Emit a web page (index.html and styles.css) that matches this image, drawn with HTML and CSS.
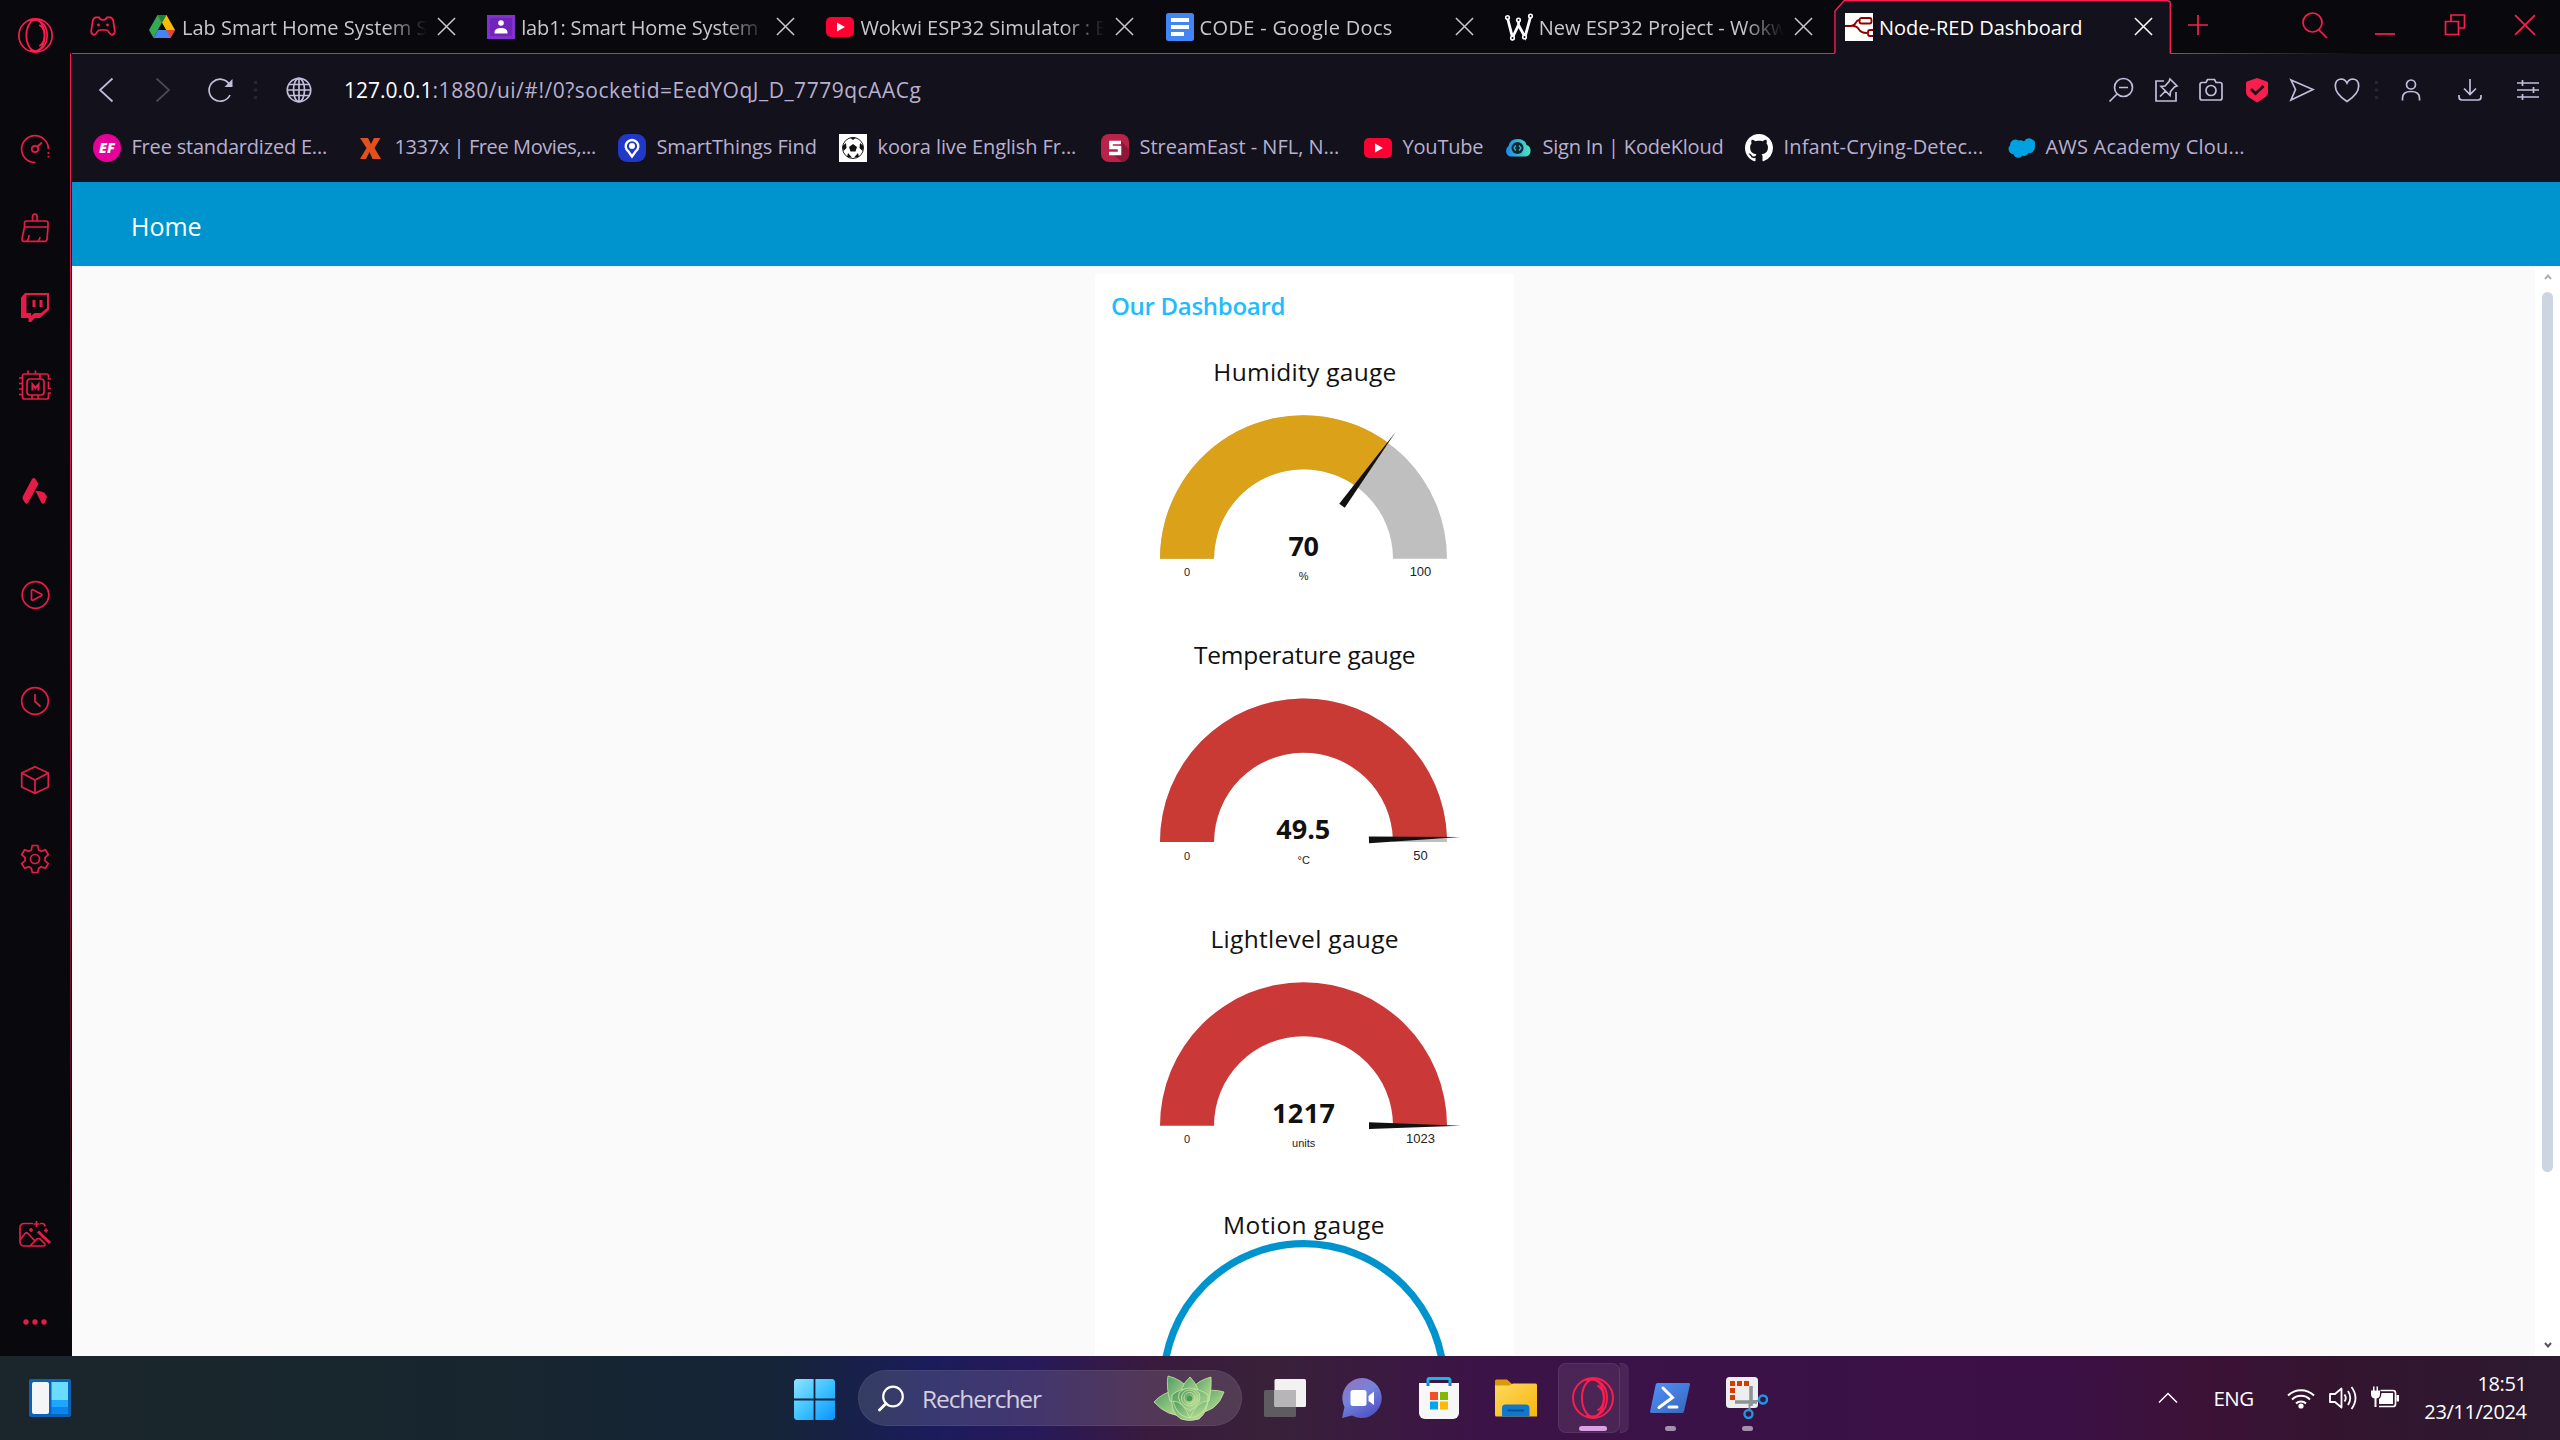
FILE: index.html
```html
<!DOCTYPE html>
<html lang="en">
<head>
<meta charset="utf-8">
<title>Node-RED Dashboard</title>
<link rel="stylesheet" href="styles.css">
</head>
<body>
<svg class="defs" width="0" height="0">
  <defs>
    <symbol id="x" viewBox="0 0 20 20"><path d="M1 1L19 19M19 1L1 19" fill="none" stroke="currentColor" stroke-width="1.6"/></symbol>
    <symbol id="yt" viewBox="0 0 28 28"><rect y="4" width="28" height="20" rx="5" fill="#ff0033"/><path d="M11 9.6L19 14L11 18.4Z" fill="#fff"/></symbol>
    <symbol id="opera" viewBox="0 0 42 42"><g fill="none" stroke="currentColor" stroke-width="2"><circle cx="21" cy="21" r="20"/><ellipse cx="21" cy="21" rx="11" ry="18.6"/><path d="M14 3.6C21 -1 35 5 35 21S21 43 14 38.400M25.500 8.500C34 13 34 29 25.500 33.500"/></g></symbol>
    <linearGradient id="win" x1="0" y1="0" x2="1" y2="1"><stop offset="0" stop-color="#8fe3ff"/><stop offset=".5" stop-color="#3fc3ff"/><stop offset="1" stop-color="#0a93ff"/></linearGradient>
    <linearGradient id="fold" x1="0" y1="0" x2="1" y2="1"><stop offset="0" stop-color="#ffd95e"/><stop offset="1" stop-color="#f7b50f"/></linearGradient>
    <linearGradient id="chat" x1="0" y1="0" x2=".6" y2="1"><stop offset="0" stop-color="#9a70b8"/><stop offset=".5" stop-color="#7484dc"/><stop offset="1" stop-color="#5355c4"/></linearGradient>
    <linearGradient id="leaf" x1="0" y1="0" x2="1" y2="1"><stop offset="0" stop-color="#4d9a63"/><stop offset="1" stop-color="#c3e59a"/></linearGradient>
    <linearGradient id="kk" x1="0" y1="0" x2="1" y2="0"><stop offset="0" stop-color="#1e88e5"/><stop offset="1" stop-color="#4fe3c1"/></linearGradient>
    <linearGradient id="ps" x1="0" y1="0" x2="1" y2="1"><stop offset="0" stop-color="#5391fe"/><stop offset="1" stop-color="#3566b8"/></linearGradient>
  </defs>
</svg>

<div class="screen">
  <div class="browser">
    <nav class="sidebar">
      <div class="side-logo"><svg width="35" height="35"><use href="#opera"/></svg></div>
      <div class="side-group first">
        <div class="side-cell"><svg width="30" height="30" viewBox="0 0 30 30"><path d="M15.500 28.500A13.400 13.400 0 1 1 28.400 15M28.400 18v2M28.400 21.800v1.600" class="ln"/><circle cx="15" cy="15" r="3.200" class="ln"/><path d="M17.500 12.500L22 8.500" class="ln"/></svg></div>
        <div class="side-cell"><svg width="30" height="30" viewBox="0 0 30 30"><path d="M12.500 8V3.500a2.200 2.200 0 0 1 4.600 0V8M4.500 14V10a2 2 0 0 1 2-2H26a2 2 0 0 1 2 2v4M4.500 14L2 26a2 2 0 0 0 2 2.300H25a2 2 0 0 0 2-1.600L28 14ZM7 28Q9 26 9 22M18 28q2-2 2-4" class="ln"/></svg></div>
        <div class="side-cell"><svg width="30" height="30" viewBox="0 0 30 30"><path d="M5 1H29V18L20 26H15L11 30H8.500V26H1V5.500ZM6.500 3V21H11V24L14.500 21H21L27 16V3Z" fill="currentColor" fill-rule="evenodd"/><path d="M12.500 8h3v7h-3zM19.500 8h3v7h-3z" fill="currentColor"/></svg></div>
        <div class="side-cell"><svg width="34" height="34" viewBox="0 0 34 34"><rect x="9" y="10" width="17" height="16" rx="3" class="ln"/><path d="M20 5H6.500a2 2 0 0 0-2 2V28a2 2 0 0 0 2 2H28.500a2 2 0 0 0 2-2V24H33M20 5h8.500a2 2 0 0 1 2 2v3h2.500M10 5V1.500M17.500 5V1.500M4.500 9H1M4.500 14.500H1M4.500 20H1M4.500 25.500H1M22 5v5M14 26v4M20 26v4M30.500 12.500v7h2.500" class="ln"/><path d="M14.500 21.500V15.500L17.500 19L20.500 15.500V21.500" fill="none" stroke="currentColor" stroke-width="2.200"/></svg></div>
      </div>
      <div class="side-cell aria"><svg width="26" height="28" viewBox="0 0 26 28"><path d="M10 2Q12 0 13.500 2L16.500 7L6 26Q4.500 27.500 3 26L.7 22Q0 20.500 1 19Z" fill="currentColor"/><path d="M13.500 14Q23 13 25 20L22.500 26Q21 27.500 19.500 26Z" fill="currentColor"/></svg></div>
      <div class="side-cell player"><svg width="30" height="30" viewBox="0 0 30 30"><circle cx="15.500" cy="15" r="13.300" class="ln"/><path d="M11.500 10.800a1 1 0 0 1 1.400-1L21.500 14.300a.8.800 0 0 1 0 1.400L12.900 20.200a1 1 0 0 1-1.400-1Z" class="ln"/></svg></div>
      <div class="side-group second">
        <div class="side-cell"><svg width="30" height="30" viewBox="0 0 30 30"><circle cx="15" cy="15" r="13.300" class="ln"/><path d="M15 8V15.500L20.500 20.500" class="ln"/></svg></div>
        <div class="side-cell"><svg width="30" height="30" viewBox="0 0 30 30"><path d="M15 1.700L28.300 8V22L15 28.300L1.700 22V8ZM1.700 8L15 15L28.300 8M15 15V28" class="ln"/></svg></div>
        <div class="side-cell"><svg width="30" height="30" viewBox="0 0 30 30"><path d="M12.300 1.500h5.400l1 4.500 2.500 1.400 4.200-1.500 2.900 4.800-3.300 3v3l3.300 3-2.900 4.600-4.200-1.500-2.500 1.500-1 4.200h-5.400l-1-4.200-2.500-1.500-4.200 1.500-2.900-4.600 3.300-3v-3l-3.300-3 2.900-4.800 4.200 1.500 2.500-1.400Z" class="ln"/><circle cx="15" cy="15" r="4.500" class="ln"/></svg></div>
      </div>
      <div class="side-group last">
        <div class="side-cell"><svg width="34" height="28" viewBox="0 0 34 28"><path d="M15 2.500H6a4 4 0 0 0-4 4V21a4 4 0 0 0 4 4H25q2 0 2.500-1.500M22 2.500h2a3 3 0 0 1 3 3M2 19L7 12.500Q8.500 11 10 12.500L17 20M12 25L19 18Q20.500 17 22 18L27.500 23.500" class="ln"/><path d="M20 10.500L32 22" stroke="currentColor" stroke-width="3"/><path d="M18.500 0v6M15.500 3h6M13 7v4M11 9h4M28 7.500v4M26 9.500h4" class="ln"/></svg></div>
        <div class="side-dots"><svg width="24" height="6"><g fill="currentColor"><circle cx="3" cy="3" r="2.700"/><circle cx="12" cy="3" r="2.700"/><circle cx="21" cy="3" r="2.700"/></g></svg></div>
      </div>
    </nav>

    <div class="main">
      <header class="tabbar">
        <svg class="gx" width="26" height="20" viewBox="0 0 26 20"><path d="M6 1.300H9Q10 4 13 4T17 1.300H20Q22.500 1.500 23.300 5L24.800 15Q24.800 18.600 22 18.800Q20 18.800 18.500 15.500Q17.800 14 16 14H10Q8.200 14 7.500 15.500Q6 18.800 4 18.800Q1.200 18.600 1.200 15L2.700 5Q3.500 1.500 6 1.300Z" class="ln"/><circle cx="8.500" cy="9" r="1.400" fill="currentColor"/><circle cx="17.500" cy="9" r="1.400" fill="currentColor"/></svg>
        <div class="tabs">
          <div class="tab">
            <svg class="fav" viewBox="0 0 28 28"><path d="M9.500 2L1 17L5.500 25L14 10Z" fill="#34a853"/><path d="M18.500 2L27 17H18L9.500 2Z" fill="#fbbc04"/><path d="M9.500 2L14 10L18.500 2Z" fill="#188038"/><path d="M14 10L18 17H10Z" fill="#09090d"/><path d="M5.500 25L10 17H27L22.500 25Z" fill="#4285f4"/><path d="M18 17H27L22.500 25Z" fill="#ea4335"/></svg>
            <span class="tab-title t1">Lab Smart Home System S</span><svg class="close"><use href="#x"/></svg>
          </div>
          <div class="tab">
            <svg class="fav" viewBox="0 0 28 28"><rect y="2" width="28" height="24" fill="#8430ce"/><rect x="3" y="5" width="22" height="18" fill="#6a1fb5" opacity=".7"/><circle cx="14" cy="10" r="2.800" fill="#fff"/><path d="M7.500 20.500V19Q8 15 14 15T20.500 19V20.500Z" fill="#fff"/></svg>
            <span class="tab-title t2">lab1: Smart Home System S</span><svg class="close"><use href="#x"/></svg>
          </div>
          <div class="tab">
            <svg class="fav"><use href="#yt"/></svg>
            <span class="tab-title t3">Wokwi ESP32 Simulator : E</span><svg class="close"><use href="#x"/></svg>
          </div>
          <div class="tab">
            <svg class="fav" viewBox="0 0 28 28"><rect width="28" height="28" rx="2.500" fill="#4285f4"/><path d="M5 5h18v4H5zM5 12h18v4H5zM5 19h13v4H5z" fill="#fff"/></svg>
            <span class="tab-title t4">CODE - Google Docs</span><svg class="close"><use href="#x"/></svg>
          </div>
          <div class="tab">
            <svg class="fav" viewBox="0 0 28 28"><g fill="none" stroke="#fff"><path d="M2.500 5L7.500 24.500L13.500 12L20 24L25.500 4M13.500 12V5" stroke-width="2.800"/><g stroke-width="1.600" fill="#09090d"><circle cx="2.500" cy="4.500" r="1.800"/><circle cx="7.500" cy="25" r="1.800"/><circle cx="13.500" cy="7" r="1.800"/><circle cx="19.500" cy="24" r="1.800"/><circle cx="25.500" cy="3" r="1.800"/></g></g></svg>
            <span class="tab-title t5">New ESP32 Project - Wokw</span><svg class="close"><use href="#x"/></svg>
          </div>
        </div>
        <div class="tab-active">
          <svg class="tab-frame" width="337" height="54" viewBox="0 0 337 54"><path d="M0 53.500L1 52V11L10 .5H333Q336.300 .5 336.300 3V54H0Z" fill="#13111b"/><path d="M0 53.500L1 52V11L10 .8H333Q336.300 .8 336.300 3V53.500" fill="none" stroke="#fa1e4e" stroke-width="1.400"/></svg>
          <svg class="fav" viewBox="0 0 28 28"><rect width="28" height="28" fill="#fff"/><g fill="none" stroke="#8f0000" stroke-width="1.800"><path d="M0 13H6Q9 13 11 9.500T15 8M8 13Q12 13 14 16.500T22 20"/><rect x="14.500" y="5" width="12" height="5.500" rx="2"/><path d="M28 17H25a2 2 0 0 0-2 2v2a2 2 0 0 0 2 2h3"/></g></svg>
          <span class="tab-title t6">Node-RED Dashboard</span><svg class="close"><use href="#x"/></svg>
        </div>
        <div class="window-tools">
          <svg width="22" height="22" viewBox="0 0 22 22"><path d="M11 1V21M1 11H21" class="ln"/></svg>
          <svg width="28" height="28" viewBox="0 0 28 28"><circle cx="11.500" cy="11.500" r="9.500" class="ln"/><path d="M18 19L26 27" class="ln"/></svg>
          <svg width="22" height="22" viewBox="0 0 22 22"><path d="M1 20H21" class="ln"/></svg>
          <svg width="22" height="22" viewBox="0 0 22 22"><path d="M7 7V1H20.500V14H14.500M1.500 7.500H14.500V20.500H1.500Z" class="ln"/></svg>
          <svg width="22" height="22"><use href="#x"/></svg>
        </div>
      </header>

      <div class="address">
        <div class="nav-icons">
          <svg width="16" height="26" viewBox="0 0 16 26"><path d="M14.500 1.500L2 13L14.500 24.500" class="ln"/></svg>
          <svg class="dim" width="16" height="26" viewBox="0 0 16 26"><path d="M1.500 1.500L14 13L1.500 24.500" class="ln"/></svg>
          <svg class="reload" width="26" height="26" viewBox="0 0 26 26"><path d="M22 18A11 11 0 1 1 21.500 7.500" class="ln"/><path d="M24.500 2V10H16.500Z" fill="currentColor"/></svg>
          <svg class="grip" width="3" height="20"><path d="M0 1h3v3H0zM0 8.500h3v3H0zM0 16h3v3H0z" fill="currentColor"/></svg>
          <svg width="26" height="26" viewBox="0 0 26 26"><g class="ln"><circle cx="13" cy="13" r="11.700"/><ellipse cx="13" cy="13" rx="5.500" ry="11.700"/><path d="M13 1V25M1.500 13H24.500M3 7.500H23M3 18.500H23"/></g></svg>
        </div>
        <div class="url"><span class="host">127.0.0.1</span><span class="path">:1880/ui/#!/0?socketid=EedYOqJ_D_7779qcAACg</span></div>
        <div class="actions">
          <svg width="26" height="26" viewBox="0 0 26 26"><circle cx="15.500" cy="10.500" r="9" class="ln"/><path d="M9 17L1.500 24.500M11 10.500H20" class="ln"/></svg>
          <svg width="26" height="26" viewBox="0 0 26 26"><path d="M11 4H3V24H23V15M17 2L24 9L21.500 10L17.500 14.500L17 18.500L8 9.500L12 9L16 4.500ZM12.500 14L7 19.500" class="ln"/></svg>
          <svg width="26" height="26" viewBox="0 0 26 26"><path d="M4 5.500H8L9.500 2.500H16.500L18 5.500H22a2 2 0 0 1 2 2V21a2 2 0 0 1-2 2H4a2 2 0 0 1-2-2V7.500a2 2 0 0 1 2-2Z" class="ln"/><circle cx="13" cy="13.500" r="5" class="ln"/></svg>
          <svg width="26" height="26" viewBox="0 0 26 26"><path d="M13 1L23 4.500Q24 5 24 6V15Q24 18 21.500 20L13 25.500L4.500 20Q2 18 2 15V6Q2 5 3 4.500Z" fill="#fa1e4e"/><path d="M7 12L11.500 16.500L19.500 9" fill="none" stroke="#13111b" stroke-width="2.800"/></svg>
          <svg width="26" height="26" viewBox="0 0 26 26"><path d="M2 3L24 12.500L2 23L6.500 12.500Z" class="ln"/></svg>
          <svg width="26" height="26" viewBox="0 0 26 26"><path d="M13 6Q11 2 7 2Q1.300 2.500 1.300 9Q1.300 17 13 24.500Q24.700 17 24.700 9Q24.700 2.500 19 2Q15 2 13 6Z" class="ln"/></svg>
          <svg class="grip" width="3" height="20"><path d="M0 1h3v3H0zM0 8.500h3v3H0zM0 16h3v3H0z" fill="currentColor"/></svg>
          <svg width="26" height="26" viewBox="0 0 26 26"><circle cx="13" cy="7.500" r="4.500" class="ln"/><path d="M4.500 23.500V21Q4.500 14.500 13 14.500T21.500 21V23.500" class="ln"/></svg>
          <svg width="26" height="26" viewBox="0 0 26 26"><path d="M13 2V17M7 11.500L13 17.500L19 11.500M2 18V20a3 3 0 0 0 3 3H21a3 3 0 0 0 3-3V18" class="ln"/></svg>
          <svg width="26" height="26" viewBox="0 0 26 26"><path d="M2 6H24M2 13H24M2 20H24M7.500 3V9M18.500 10V16M7.500 17V23" class="ln"/></svg>
        </div>
      </div>

      <div class="bookmarks">
        <a><svg class="fav" viewBox="0 0 28 28"><circle cx="14" cy="14" r="14" fill="#e4029b"/><text x="14" y="19" text-anchor="middle" class="ef">EF</text></svg><span class="b1">Free standardized E...</span></a>
        <a><svg class="fav" viewBox="0 0 28 28"><path d="M4 4H12L15 10L18 4H24.500L18.500 14L25 25H16.500L13.500 18L10 25H4L10.500 14Z" fill="#e0511d"/></svg><span class="b2">1337x | Free Movies,...</span></a>
        <a><svg class="fav" viewBox="0 0 28 28"><rect width="28" height="28" rx="9" fill="#2038c8"/><path d="M14 22.500L10.500 17.500A6.300 6.300 0 1 1 17.500 17.500Z" fill="none" stroke="#fff" stroke-width="2.400"/><circle cx="14" cy="12" r="3" fill="#fff"/></svg><span class="b3">SmartThings Find</span></a>
        <a><svg class="fav" viewBox="0 0 28 28"><rect width="28" height="28" fill="#fff"/><circle cx="14" cy="14" r="10.500" fill="#fff" stroke="#222" stroke-width="1"/><path d="M14 10L18 13L16.500 17.500H11.500L10 13ZM11 3.500H17L14 6ZM3.500 12L7 9L7.500 14L4.500 17ZM24.500 12L21 9L20.500 14L23.500 17ZM8 23L9 19L13 23.500ZM20 23L19 19L15 23.500Z" fill="#111"/></svg><span class="b4">koora live English Fr...</span></a>
        <a><svg class="fav" viewBox="0 0 28 28"><rect width="28" height="28" rx="8" fill="#b9234a"/><path d="M14 22L20 7L28 15V22Q27 27 21 28Z" fill="#8f1636"/><path d="M20 8.500H10V13.500H18.500V19.500H8" fill="none" stroke="#fff" stroke-width="3.600"/></svg><span class="b5">StreamEast - NFL, N...</span></a>
        <a><svg class="fav"><use href="#yt"/></svg><span class="b6">YouTube</span></a>
        <a><svg class="fav" viewBox="0 0 28 28"><path d="M6 22.500A6 6 0 0 1 4.500 12Q6 5 13.500 5T22.500 11A6 6 0 0 1 22 22.500Z" fill="url(#kk)"/><circle cx="13.500" cy="14" r="6" fill="#10262c"/><path d="M12 11.500L10 14L12 16.500M15 11.500L17 14L15 16.500" fill="none" stroke="#2fb6d8" stroke-width="1.300"/></svg><span class="b7">Sign In | KodeKloud</span></a>
        <a><svg class="fav" viewBox="0 0 16 16"><path fill="#fff" d="M8 0C3.580 0 0 3.580 0 8c0 3.540 2.290 6.530 5.470 7.590.4.070.55-.17.55-.38 0-.19-.01-.82-.01-1.490-2.010.37-2.530-.49-2.690-.94-.09-.23-.48-.94-.82-1.130-.28-.15-.68-.52-.01-.53.63-.01 1.080.58 1.230.82.720 1.210 1.870.87 2.330.66.070-.52.280-.87.510-1.070-1.780-.2-3.640-.89-3.640-3.950 0-.87.310-1.590.82-2.150-.08-.2-.36-1.020.08-2.120 0 0 .67-.21 2.200.82.640-.18 1.320-.27 2-.27s1.360.09 2 .27c1.530-1.040 2.200-.82 2.200-.82.440 1.100.16 1.920.08 2.120.51.560.82 1.270.82 2.150 0 3.070-1.870 3.750-3.650 3.950.29.250.54.730.54 1.480 0 1.070-.01 1.930-.01 2.200 0 .21.150.46.550.38A8.010 8.010 0 0 0 16 8c0-4.420-3.580-8-8-8z"/></svg><span class="b8">Infant-Crying-Detec...</span></a>
        <a><svg class="fav" viewBox="0 0 28 28"><path d="M11.500 6.500A6 6 0 0 1 17 7.500A6 6 0 0 1 28 12Q28 19 21.500 19A4.500 4.500 0 0 1 15.500 21.500A5 5 0 0 1 6.500 20A5 5 0 0 1 3 11.500A5.500 5.500 0 0 1 11.500 6.500Z" fill="#00a1e0"/></svg><span class="b9">AWS Academy Clou...</span></a>
      </div>

      <div class="page">
        <div class="page-header"><span>Home</span></div>
        <div class="page-body">
          <div class="content">
            <section class="card">
              <h2>Our Dashboard</h2>
              <svg class="gauge" width="419" height="283" viewBox="0 0 419 283">
                <text x="118.300" y="36.700" textLength="183" class="g-title">Humidity gauge</text>
                <path d="M65 214.700A143.500 143.500 0 0 1 352 214.700H298A89.500 89.500 0 0 0 119 214.700Z" fill="#bfbfbf"/>
                <path d="M65 214.700A143.500 143.500 0 0 1 292.850 98.600L261.100 142.300A89.500 89.500 0 0 0 119 214.700Z" fill="#dba119"/>
                <path d="M65.500 -3.400V3.400L157 0Z" transform="translate(208.500 214.700) rotate(-54)" fill="#111"/>
                <text x="193.500" y="211.700" textLength="30.500" class="g-value">70</text>
                <text x="92" y="232" class="g-min">0</text><text x="208.700" y="236" class="g-min">%</text><text x="325.500" y="232" class="g-max">100</text>
              </svg>
              <svg class="gauge" width="419" height="284" viewBox="0 0 419 284">
                <text x="99" y="36.600" textLength="221.500" class="g-title">Temperature gauge</text>
                <path d="M65 215A143.500 143.500 0 0 1 352 215H298A89.500 89.500 0 0 0 119 215Z" fill="#bfbfbf"/>
                <path d="M65 215A143.500 143.500 0 0 1 351.930 210.500L297.950 212.200A89.500 89.500 0 0 0 119 215Z" fill="#ca3a35"/>
                <path d="M65.500 -3.400V3.400L157 0Z" transform="translate(208.500 215) rotate(-1.800)" fill="#111"/>
                <text x="181.300" y="212.300" textLength="54" class="g-value">49.5</text>
                <text x="92" y="233" class="g-min">0</text><text x="208.700" y="237" class="g-min">°C</text><text x="325.500" y="233" class="g-max">50</text>
              </svg>
              <svg class="gauge" width="419" height="284" viewBox="0 0 419 284">
                <text x="115.500" y="37" textLength="188" class="g-title">Lightlevel gauge</text>
                <path d="M65 214.700A143.500 143.500 0 0 1 352 214.700H298A89.500 89.500 0 0 0 119 214.700Z" fill="#ca3838"/>
                <path d="M65.500 -3.400V3.400L157 0Z" transform="translate(208.500 214.700)" fill="#111"/>
                <text x="177" y="212" textLength="63" class="g-value">1217</text>
                <text x="92" y="232" class="g-min">0</text><text x="208.700" y="236" class="g-min">units</text><text x="325.500" y="232" class="g-max">1023</text>
              </svg>
              <svg class="gauge" width="419" height="161" viewBox="0 0 419 161">
                <text x="128" y="38.700" textLength="161.500" class="g-title">Motion gauge</text>
                <circle cx="208.800" cy="189" r="140.300" fill="none" stroke="#0094ce" stroke-width="7.300"/>
              </svg>
            </section>
          </div>
          <div class="scrollbar">
            <svg width="8" height="6" viewBox="0 0 8 6"><path d="M1 5L4 1.500L7 5" fill="none" stroke="#b0b0b0" stroke-width="2"/></svg>
            <div class="thumb"></div>
            <svg width="8" height="6" viewBox="0 0 8 6"><path d="M1 1L4 4.500L7 1" fill="none" stroke="#555" stroke-width="2"/></svg>
          </div>
        </div>
      </div>
    </div>
  </div>

  <footer class="taskbar">
    <div class="widgets"><svg width="42" height="38" viewBox="0 0 42 38"><rect width="42" height="38" rx="2" fill="#0d62b8"/><rect x="3" y="3" width="17" height="32" rx="2" fill="#f4f5f7"/><rect x="22.500" y="3" width="16.500" height="18" fill="#69dcff"/><rect x="22.500" y="21" width="16.500" height="7" fill="#1fa7ff"/><rect x="22.500" y="28" width="16.500" height="7" fill="#0686ee"/></svg></div>
    <div class="start"><svg width="41" height="41" viewBox="0 0 41 41"><path d="M2 0H19.600V19.600H0V2ZM21.400 0H39L41 2V19.600H21.400ZM0 21.400H19.600V41H2L0 39ZM21.400 21.400H41V39L39 41H21.400Z" fill="url(#win)"/></svg></div>
    <div class="search">
      <svg width="26" height="27" viewBox="0 0 26 27"><circle cx="15" cy="11.500" r="9.800" fill="none" stroke="#fff" stroke-width="2.200"/><path d="M8 18.500L1.500 25" stroke="#fff" stroke-width="2.800" stroke-linecap="round"/></svg>
      <span>Rechercher</span>
      <svg width="72" height="46" viewBox="0 0 72 46"><g fill="url(#leaf)" stroke="#cfe6a0" stroke-width=".8"><path d="M1 27Q10 17 24 15L34 41Q14 42 1 27Z"/><path d="M71 17Q58 13 48 18L42 38Q64 38 71 17Z"/><path d="M15 1Q28 4 36 14L32 30L17 26Q13 12 15 1Z"/><path d="M58 2Q46 5 38 14L42 30L56 26Q59 12 58 2Z"/><path d="M37 2Q26 12 28 24H46Q47 12 37 2Z"/><path d="M19 20Q17 38 28 44Q36 47 46 44Q56 36 55 20Q46 13 37 14Q27 13 19 20Z"/><path d="M20 26Q30 26 37 43Q24 42 20 26ZM55 26Q44 26 37 43Q51 42 55 26Z"/><path d="M26 18Q36 8 46 18Q50 28 37 36Q23 28 26 18Z"/><circle cx="36.500" cy="23" r="8"/><circle cx="36.500" cy="23" r="5.500"/></g><circle cx="36.500" cy="23.500" r="2.800" fill="#4d9a55"/></svg>
    </div>
    <div class="apps">
      <div class="app"><svg width="42" height="40" viewBox="0 0 42 40"><rect y="12" width="32" height="27" rx="1.500" fill="#5f5c61"/><rect x="10.500" y="1" width="31.500" height="28" rx="1.500" fill="#f2f2f3"/><path d="M10.500 12H32V29H12a1.500 1.500 0 0 1-1.500-1.500Z" fill="#b7b5b8"/></svg></div>
      <div class="app"><svg width="40" height="40" viewBox="0 0 40 40"><path d="M20 0A20 20 0 1 1 10 37.500L0 40L2.500 29A20 20 0 0 1 20 0Z" fill="url(#chat)"/><rect x="8.500" y="12" width="16" height="16" rx="2.500" fill="#fff"/><path d="M26.500 18L32 13.500V27L26.500 23Z" fill="#fff"/></svg></div>
      <div class="app"><svg width="40" height="42" viewBox="0 0 40 42"><path d="M9 9V3a1.500 1.500 0 0 1 1.500-1.500H29.500A1.500 1.500 0 0 1 31 3V9" fill="none" stroke="#19b4ea" stroke-width="3"/><path d="M0 6H40V36a6 6 0 0 1-6 6H6a6 6 0 0 1-6-6Z" fill="#f7f7f8"/><path d="M7.500 6h3v3h-3zM29.500 6h3v3h-3z" fill="#1384c8"/><path d="M11 15h8v8h-8z" fill="#f25022"/><path d="M21 15h8v8h-8z" fill="#7fba00"/><path d="M11 24.500h8v8h-8z" fill="#00a4ef"/><path d="M21 24.500h8v8h-8z" fill="#ffb900"/></svg></div>
      <div class="app"><svg width="42" height="38" viewBox="0 0 42 38"><path d="M0 10V2a1.500 1.500 0 0 1 1.500-1.500H12L17 5V10Z" fill="#d99a06"/><path d="M0 6.500H14L18 4.500H40.500a1.500 1.500 0 0 1 1.500 1.500V37.500H1.500A1.500 1.500 0 0 1 0 36Z" fill="url(#fold)"/><path d="M7 37.500V29a3.500 3.500 0 0 1 3.500-3.500H31A3.500 3.500 0 0 1 34.500 29V37.500Z" fill="#0d78cc"/><path d="M12.500 31.500H29" stroke="#07508f" stroke-width="1.800"/></svg></div>
      <div class="app active"><i class="stack"></i><i class="tile"></i><svg class="opera" width="42" height="42"><use href="#opera"/></svg><i class="bar wide"></i></div>
      <div class="app"><svg width="40" height="32" viewBox="0 0 40 32"><path d="M7.500 1H38.500a1.500 1.500 0 0 1 1.400 2L34 29.500a2 2 0 0 1-2 1.500H1.500A1.500 1.500 0 0 1 .2 29L5.700 2.500A2 2 0 0 1 7.500 1Z" fill="url(#ps)"/><path d="M13 6L22.500 15.500L9 25.500M19 25H27" fill="none" stroke="#fff" stroke-width="3" stroke-linecap="round"/></svg><i class="bar"></i></div>
      <div class="app"><svg width="42" height="42" viewBox="0 0 42 42"><rect width="32" height="31" rx="3.500" fill="#eceef0"/><path d="M4 4h5v5H4zM11 4h5v5h-5zM18 4h5v5h-5zM4 11h5v5H4zM4 18h5v5H4z" fill="#d83b01"/><path d="M25 9V29M9 25H31" fill="none" stroke="#8d9499" stroke-width="3.600"/><path d="M23.500 33V27M32 24H27" stroke="#8d9499" stroke-width="2"/><circle cx="37" cy="22.500" r="4" fill="none" stroke="#1f97dc" stroke-width="2.400"/><circle cx="22.500" cy="37" r="4" fill="none" stroke="#1f97dc" stroke-width="2.400"/></svg><i class="bar"></i></div>
    </div>
    <div class="tray">
      <svg width="20" height="12" viewBox="0 0 20 12"><path d="M1 10.500L10 1.500L19 10.500" fill="none" stroke="#fff" stroke-width="1.500"/></svg>
      <span class="lang">ENG</span>
      <svg width="28" height="24" viewBox="0 0 28 24"><g fill="none" stroke="#fff" stroke-width="2"><path d="M1 9.500A18.500 18.500 0 0 1 27 9.500M5 13.500A12.800 12.800 0 0 1 23 13.500M9 17.500A7 7 0 0 1 19 17.500"/></g><circle cx="14" cy="20" r="2.600" fill="#fff"/></svg>
      <svg width="28" height="24" viewBox="0 0 28 24"><g fill="none" stroke="#fff" stroke-width="1.800"><path d="M1 8H6L12.500 2.500V21.500L6 16H1Z" stroke-linejoin="round"/><path d="M15.500 8.500Q18 12 15.500 15.500M19 5Q23.500 12 19 19M22.500 1Q30.500 12 22.500 23"/></g></svg>
      <svg width="28" height="24" viewBox="0 0 28 24"><path d="M9.500 4.500H22a2.500 2.500 0 0 1 2.500 2.500V18a2.500 2.500 0 0 1-2.500 2.500H8" fill="none" stroke="#fff" stroke-width="1.700"/><path d="M10.500 7H22V18H8V13Q10 12 10.500 7ZM25.500 9H28V15.500H25.500ZM0 4.500H2V.5H3.500V4.500H5.500V.5H7V4.500H9V8Q9 12 5.500 12.500V21H3.500V12.500Q0 12 0 8Z" fill="#fff"/></svg>
      <div class="clock"><span class="time">18:51</span><span class="date">23/11/2024</span></div>
    </div>
  </footer>
</div>
</body>
</html>
```

FILE: styles.css
```css
* { box-sizing: border-box; }
body { margin: 0; background: #09090d; font-family: "Open Sans", "Noto Sans", sans-serif; }
svg { display: block; flex: none; }
.defs { position: absolute; }
.ln { fill: none; stroke: currentColor; stroke-width: 1.7; }

.screen { width: 2560px; height: 1440px; display: flex; flex-direction: column; overflow: hidden; }
.browser { display: flex; height: 1356px; }

/* left rail */
.sidebar { width: 72px; flex: none; display: flex; flex-direction: column; color: #e51c47; background: linear-gradient(to bottom, #fa1e4e, #c01a40 50%, #09090d 95%) 70px 53px / 1px 100% no-repeat, #09090d; padding-right: 2px; }
.side-logo, .side-cell, .side-dots { display: flex; align-items: center; justify-content: center; }
.side-logo { height: 70px; color: #fa1e4e; }
.side-cell { height: 79px; }
.first { margin-top: 39px; }
.aria { margin-top: 26px; }
.player { margin-top: 25px; }
.second { margin-top: 27px; }
.last { margin-top: auto; }
.side-dots { height: 68px; margin-top: 14px; }

.main { flex: 1; display: flex; flex-direction: column; min-width: 0; }

/* tabs */
.tabbar { height: 54px; display: flex; background: linear-gradient(to right, #fa1e4e 2098px, transparent 2290px) 0 53px / 100% 1px no-repeat, #09090d; }
.gx { margin: 16px 22px 0 18px; color: #fa1e4e; }
.tabs { flex: none; display: grid; grid-template-columns: repeat(5, 339.2px); width: 1696px; }
.tab, .tab-active { display: flex; align-items: center; height: 53px; padding-left: 10px; color: #c9c7cc; }
.fav { width: 28px; height: 28px; }
.tab-title { width: 248px; margin-left: 5px; padding: 1px 0 0 1px; font-size: 20px; white-space: nowrap; overflow: hidden; mask-image: linear-gradient(to right, #000 205px, transparent 246px); }
.t2 { letter-spacing: -.15px; }
.t4 { letter-spacing: .33px; }
.close { width: 19px; height: 19px; margin-left: 8px; }
.tab-active { position: relative; flex: none; width: 337px; padding-left: 11px; color: #fff; }
.tab-active .fav, .tab-active .tab-title, .tab-active .close { position: relative; }
.tab-active .tab-title { mask-image: none; width: 250px; }
.tab-active .close { margin-left: 6px; }
.tab-frame { position: absolute; left: 0; top: 0; }
.window-tools { flex: none; display: grid; grid-template-columns: 54px 125px 70px 70px 70px; justify-items: center; align-items: center; color: #fa1e4e; height: 50px; }
.window-tools svg:nth-child(2) { justify-self: end; margin-right: 21px; }

/* address bar */
.address { height: 72px; display: flex; align-items: center; background: #13111b; color: #b7b0d0; }
.nav-icons { display: grid; grid-template-columns: 68px 46px 64px 11px 76px; align-items: center; justify-items: center; width: 272px; height: 72px; color: #c3bddb; }
.reload { margin-left: 6px; }
.dim { color: #4c4957; }
.grip { color: #282536; }
.url { font-size: 21px; width: 1754px; white-space: nowrap; }
.host { color: #fff; }
.path { letter-spacing: .51px; }
.actions { display: grid; grid-template-columns: 45px 45px 46px 45px 46px 44px 14px 56px 62px 54px; align-items: center; justify-items: center; color: #c3bddb; }

/* bookmarks */
.bookmarks { height: 56px; padding: 0 0 12px 21px; display: grid; grid-template-columns: 263px 262px 221px 262px 263px 140px 241px 262px 300px; align-items: center; background: #13111b; color: #b7b0d0; }
.bookmarks a { display: flex; align-items: center; gap: 10.5px; font-size: 20px; line-height: 28px; white-space: nowrap; }
.bookmarks span { padding-bottom: 2px; }
.b1 { letter-spacing: -.2px; }
.b2 { letter-spacing: -.4px; }
.b3, .b4 { letter-spacing: -.1px; }
.b6 { letter-spacing: -.2px; }
.b7 { letter-spacing: -.22px; }
.b8 { letter-spacing: .16px; }
.b9 { letter-spacing: .2px; }
.ef { font: italic 800 14px "Open Sans", sans-serif; fill: #fff; }

/* dashboard page */
.page { flex: 1; display: flex; flex-direction: column; min-height: 0; background: #fafafa; }
.page-header { height: 84px; display: flex; align-items: center; padding: 3px 0 0 59px; background: #0094ce; color: #fff; font-size: 25px; font-weight: 500; }
.page-body { flex: 1; display: flex; min-height: 0; }
.content { flex: 1; display: flex; justify-content: center; padding: 8px 0 0 2px; overflow: hidden; }
.card { width: 419px; background: #fff; overflow: hidden; }
.card h2 { margin: 0; height: 70px; padding: 15px 0 0 16px; font-size: 24px; line-height: 33px; font-weight: 600; letter-spacing: -.3px; color: #1fbcff; white-space: nowrap; }
.g-title { font-size: 24.5px; font-weight: 500; fill: #111; }
.g-value { font-size: 27px; font-weight: 700; fill: #111; }
.g-min { font: 11px "Liberation Sans", Arial, sans-serif; fill: #222; text-anchor: middle; }
.g-max { font: 13px "Liberation Sans", Arial, sans-serif; fill: #222; text-anchor: middle; }
.scrollbar { width: 25px; background: #fff; display: flex; flex-direction: column; align-items: center; padding: 8px 0; justify-content: flex-start; }
.thumb { width: 11px; height: 880px; margin-top: 12px; margin-bottom: auto; border-radius: 6px; background: #ccd6e2; }

/* taskbar */
.taskbar { height: 84px; display: flex; align-items: center; color: #fff; background: linear-gradient(to right, #1b262b 0, #17262f 500px, #152438 780px, #1b1c5c 930px, #27195a 1030px, #3a1a3e 1150px, #382139 1270px, #3c1346 1480px, #3a1248 1700px, #3b1046 2050px, #3c1237 2200px, #33142f 2330px, #2c1a2f 2560px); }
.widgets { width: 100px; display: flex; justify-content: center; }
.start { width: 76px; margin-left: 676px; display: flex; justify-content: center; padding-top: 2px; }
.search { margin-left: 6px; width: 384px; height: 56px; border-radius: 28px; display: flex; align-items: center; padding-left: 19px; background: rgba(255, 255, 255, .13); border: 1px solid rgba(255, 255, 255, .06); }
.search span { width: 231px; margin-left: 18px; font-size: 24.5px; letter-spacing: -1.1px; color: #d4cede; }
.apps { display: grid; grid-template-columns: repeat(7, 77px); margin-left: 4.5px; }
.app { position: relative; height: 84px; display: flex; align-items: center; justify-content: center; }
.bar { position: absolute; left: 33px; bottom: 9px; width: 11px; height: 5px; border-radius: 3px; background: #a68fae; }
.bar.wide { left: 24.500px; width: 28px; background: #dd9fe6; }
.tile, .stack { position: absolute; left: 3.500px; top: 7px; width: 62px; height: 70px; border-radius: 8px; background: rgba(255, 255, 255, .08); border: 1px solid rgba(255, 255, 255, .07); }
.stack { left: 12px; clip-path: inset(0 0 0 53px); }
.opera { position: relative; color: #fa1e4e; }
.tray { flex: none; display: grid; grid-template-columns: 62px 74px 42px 42px 42px 121px; margin-left: 358px; align-items: center; justify-items: center; }
.tray svg:first-child { margin-right: 14px; }
.lang { justify-self: start; margin-left: 8px; font-size: 20.5px; letter-spacing: -.6px; }
.clock { display: flex; flex-direction: column; align-items: flex-end; justify-self: end; font-size: 20px; line-height: 28px; letter-spacing: -.4px; }
```
